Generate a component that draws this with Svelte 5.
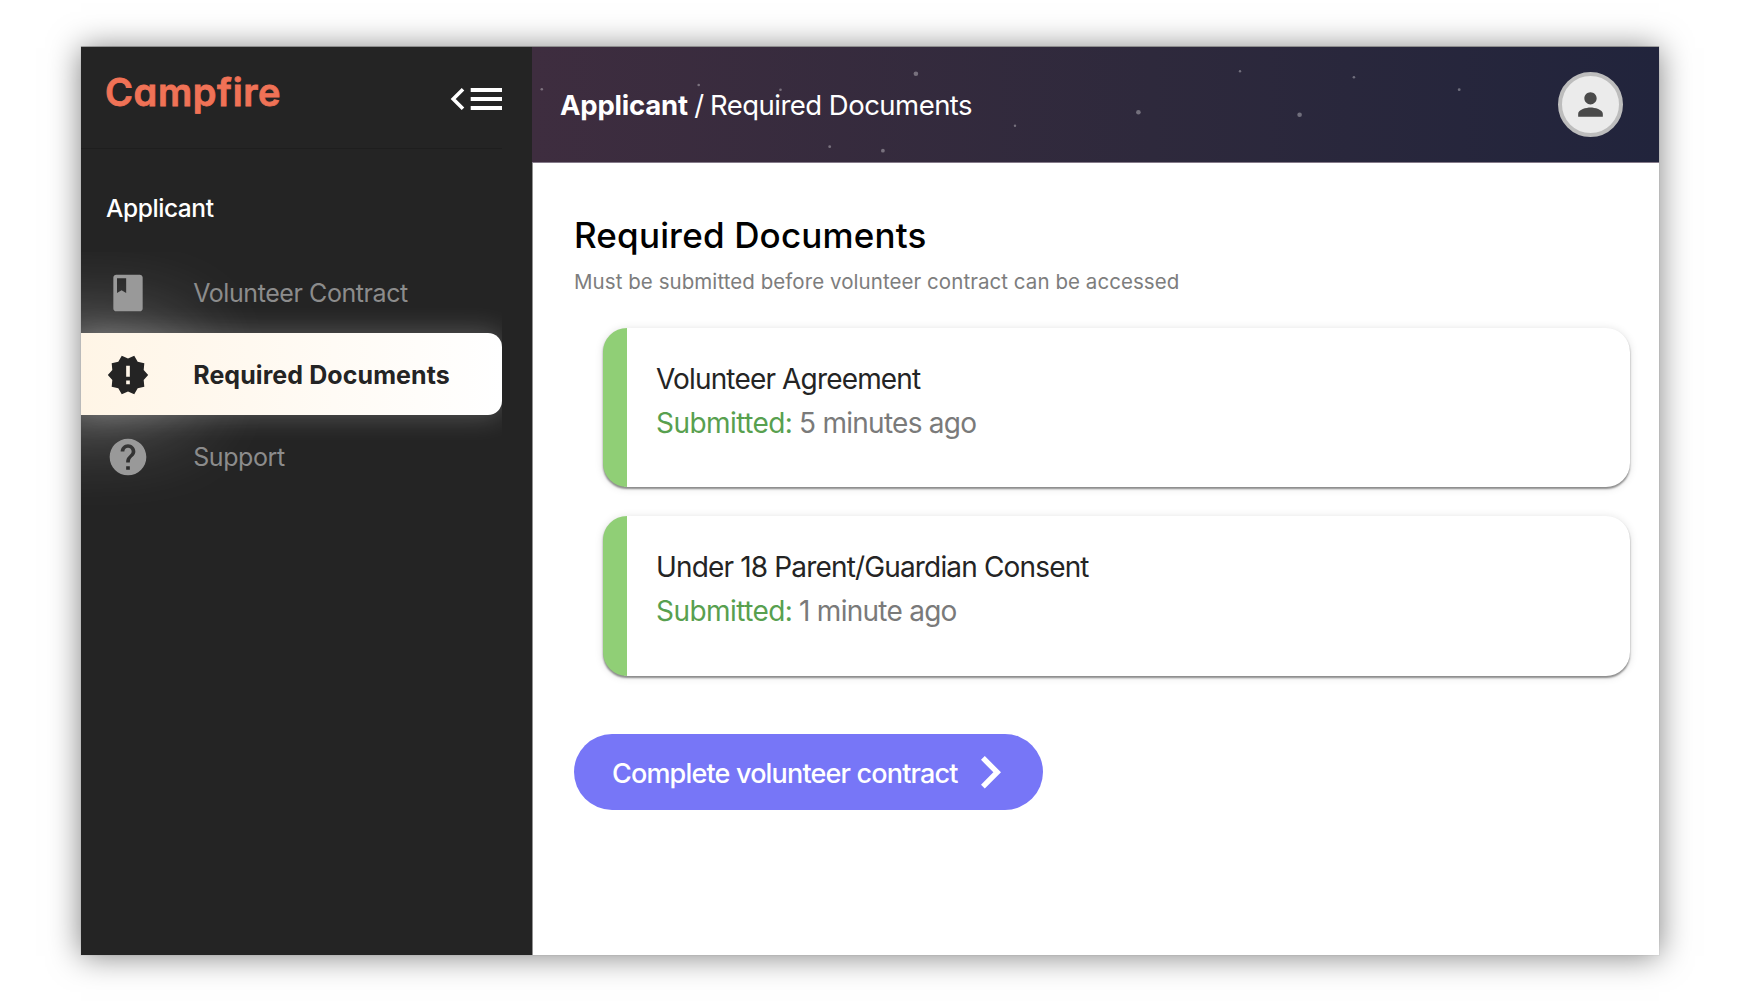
<script>
  const navItems = [
    { label: 'Volunteer Contract', icon: 'book', active: false },
    { label: 'Required Documents', icon: 'alert', active: true },
    { label: 'Support', icon: 'help', active: false }
  ];

  const icons = {
    book: 'M18.4 2H5.6C4.7 2 4 2.7 4 3.6v16.8c0 .9.7 1.6 1.6 1.6h12.8c.9 0 1.6-.7 1.6-1.6V3.6C20 2.7 19.3 2 18.4 2zM6 4h5v8l-2.5-1.5L6 12V4z',
    alert:
      'M23 12l-2.44-2.78.34-3.68-3.61-.82-1.89-3.18L12 3 8.6 1.54 6.71 4.72l-3.61.81.34 3.68L1 12l2.44 2.78-.34 3.69 3.61.82 1.89 3.18L12 21l3.4 1.46 1.89-3.18 3.61-.82-.34-3.68L23 12zm-10 5h-2v-2h2v2zm0-4h-2V7h2v6z',
    help: 'M12 2C6.48 2 2 6.48 2 12s4.48 10 10 10 10-4.48 10-10S17.52 2 12 2zm1 17h-2v-2h2v2zm2.07-7.75l-.9.92C13.45 12.9 13 13.5 13 15h-2v-.5c0-1.1.45-2.1 1.17-2.83l1.24-1.26c.37-.36.59-.86.59-1.41 0-1.1-.9-2-2-2s-2 .9-2 2H8c0-2.21 1.79-4 4-4s4 1.79 4 4c0 .88-.36 1.68-.93 2.25z'
  };

  const documents = [
    { title: 'Volunteer Agreement', when: '5 minutes ago' },
    { title: 'Under 18 Parent/Guardian Consent', when: '1 minute ago' }
  ];

  // x, y and radius inside the 1127 x 116 header
  const stars = [
    [9.8, 42.3, 1.3], [166.7, 38, 1.3], [248.5, 42.7, 1.3], [383.9, 26.7, 2.3],
    [483, 78.7, 1.2], [297.7, 99.7, 1.4], [350.9, 103.7, 1.9], [708, 24.3, 1.2],
    [821.9, 30.3, 1.3], [927.2, 42.7, 1.4], [606.4, 65.3, 2.3], [767.6, 67.7, 2.3]
  ];
</script>

<div class="page">
  <div class="window">
    <aside class="sidebar">
      <div class="brand">
        <span class="logo">Campfire</span>
        <svg class="collapse" viewBox="0 0 52 24" aria-label="Collapse menu">
          <path d="M13 2.2 3.2 12l9.8 9.8" />
          <path class="bar" d="M20.7 3H52M20.7 12H52M20.7 21H52" />
        </svg>
      </div>
      <div class="section">Applicant</div>
      <nav>
        {#each navItems as item}
          <div class="item" class:active={item.active}>
            <svg viewBox="0 0 24 24"><path d={icons[item.icon]} /></svg>
            <span>{item.label}</span>
          </div>
        {/each}
      </nav>
    </aside>

    <main>
      <header>
        <svg class="stars" viewBox="0 0 1127 116">
          {#each stars as [x, y, r]}
            <circle cx={x} cy={y} {r} />
          {/each}
        </svg>
        <div class="crumbs"><b>Applicant</b><span class="slash">/</span><span>Required Documents</span></div>
        <div class="avatar">
          <svg viewBox="0 0 24 24"><path d="M12 12c2.21 0 4-1.79 4-4s-1.79-4-4-4-4 1.79-4 4 1.79 4 4 4zm0 2c-2.67 0-8 1.34-8 4v2h16v-2c0-2.66-5.33-4-8-4z" /></svg>
        </div>
      </header>

      <section class="content">
        <h1>Required Documents</h1>
        <p class="hint">Must be submitted before volunteer contract can be accessed</p>
        <div class="cards">
          {#each documents as doc}
            <article>
              <div class="title">{doc.title}</div>
              <div class="status"><span class="ok">Submitted:</span><span>{doc.when}</span></div>
            </article>
          {/each}
        </div>
        <button>
          <span>Complete volunteer contract</span>
          <svg viewBox="0 0 7.41 12"><path d="M1.41 0 0 1.41 4.58 6 0 10.59 1.41 12l6-6z" /></svg>
        </button>
      </section>
    </main>
  </div>
</div>

<style>
  :global(body) {
    background: #fff;
  }
  .page {
    box-sizing: border-box;
    width: 1740px;
    height: 1002px;
    padding: 47px 81px;
    overflow: hidden;
  }
  .window {
    width: 1578px;
    height: 908px;
    display: flex;
    background: #fff;
    font-family: Inter, 'Liberation Sans', sans-serif;
    box-shadow: 0 -1px 0 rgba(0, 0, 0, 0.25), 0 0 0 1px rgba(0, 0, 0, 0.03), 0 1px 30px rgba(0, 0, 0, 0.5);
  }
  .sidebar {
    width: 451px;
    flex: none;
    background: #242424;
  }
  .brand {
    display: flex;
    justify-content: space-between;
    align-items: flex-start;
    box-sizing: border-box;
    height: 102px;
    margin-right: 30px;
    padding-left: 24px;
    border-bottom: 1px solid #1e1e1e;
  }
  .logo {
    margin-top: 21px;
    line-height: 48px;
    font-size: 38px;
    font-weight: 600;
    letter-spacing: 0.6px;
    color: #f07256;
    font-feature-settings: 'cv11';
    -webkit-text-stroke: 0.8px #f07256;
  }
  .collapse {
    width: 52px;
    height: 24px;
    margin-top: 40px;
    fill: none;
    stroke: #fff;
    stroke-width: 3.6;
  }
  .collapse .bar {
    stroke-width: 4;
  }
  .section {
    box-sizing: border-box;
    height: 102.5px;
    padding: 43px 0 0 25px;
    line-height: 32px;
    font-size: 24.5px;
    font-weight: 500;
    letter-spacing: -0.42px;
    color: #fff;
  }
  nav {
    width: 421px;
    height: 500px;
    overflow: hidden;
  }
  .item {
    display: flex;
    align-items: center;
    gap: 43.2px;
    box-sizing: border-box;
    height: 81.8px;
    padding: 1.5px 0 0 25px;
    font-size: 25px;
    letter-spacing: -0.42px;
    color: #8c8c8c;
  }
  .item svg {
    width: 44px;
    height: 44px;
    flex: none;
    fill: #999;
    position: relative;
  }
  .item.active {
    border-radius: 0 14px 14px 0;
    background: linear-gradient(90deg, #fff5e6, #fff);
    color: #242424;
    font-weight: 700;
    letter-spacing: 0.08px;
    box-shadow: 0 0 28px rgba(255, 255, 255, 0.26), -320px 0 90px rgba(255, 255, 255, 0.42);
  }
  .item.active svg {
    fill: #242424;
  }
  main {
    flex: 1;
    min-width: 0;
  }
  header {
    position: relative;
    box-sizing: border-box;
    height: 116px;
    padding: 0 36px 0 28px;
    display: flex;
    align-items: center;
    justify-content: space-between;
    background: linear-gradient(90deg, #3e2d3f, #2e293c 55%, #21243c);
    border-bottom: 1px solid #857b8a;
    color: #fff;
  }
  .stars {
    position: absolute;
    inset: 0;
    width: 1127px;
    height: 116px;
    fill: #fff;
    opacity: 0.33;
  }
  .crumbs {
    position: relative;
    display: flex;
    font-size: 27.5px;
    line-height: 36px;
    letter-spacing: -0.52px;
  }
  .crumbs b {
    font-weight: 700;
    letter-spacing: -0.2px;
  }
  .slash {
    width: 22px;
    text-align: center;
  }
  .avatar {
    position: relative;
    box-sizing: border-box;
    width: 65px;
    height: 65px;
    border: 4px solid #bdbdbd;
    border-radius: 50%;
    background: #ebebeb;
    display: grid;
    place-items: center;
  }
  .avatar svg {
    width: 37px;
    height: 37px;
    fill: #4a4a4a;
  }
  .content {
    box-sizing: border-box;
    height: 792px;
    padding: 50px 29px 0 41px;
    border-left: 1px solid #929292;
  }
  h1 {
    margin: 0;
    font-size: 35px;
    line-height: 44px;
    font-weight: 500;
    letter-spacing: 0.17px;
    color: #000;
  }
  .hint {
    margin: 12px 0 0;
    font-size: 20.5px;
    line-height: 26px;
    letter-spacing: 0.06px;
    color: #7d7d7d;
  }
  .cards {
    display: grid;
    gap: 29px;
    margin: 32.5px 0 0 29px;
  }
  article {
    box-sizing: border-box;
    height: 159.5px;
    padding: 29.4px 0 0 29px;
    border-left: 24px solid #90cf76;
    border-radius: 24px;
    background: #fff;
    box-shadow: 0 2px 2px -0.5px rgba(0, 0, 0, 0.42), 0 1px 9px rgba(0, 0, 0, 0.13);
    font-size: 28px;
    line-height: 44px;
  }
  .title {
    letter-spacing: -0.84px;
    color: #242424;
  }
  .status {
    display: flex;
    gap: 6.7px;
    letter-spacing: -0.74px;
    color: #7a7a7a;
  }
  .ok {
    letter-spacing: -0.55px;
    color: #58a04f;
  }
  button {
    display: flex;
    align-items: center;
    justify-content: space-between;
    box-sizing: border-box;
    width: 468.5px;
    height: 76.5px;
    margin-top: 58px;
    padding: 1px 41.5px 0 38px;
    border: 0;
    border-radius: 38.25px;
    background: #7776f7;
    color: #fff;
    font: 450 27px Inter, 'Liberation Sans', sans-serif;
    letter-spacing: -0.83px;
  }
  button span {
    padding-top: 2px;
  }
  button svg {
    width: 20px;
    height: 32.5px;
    fill: #fff;
  }
</style>
